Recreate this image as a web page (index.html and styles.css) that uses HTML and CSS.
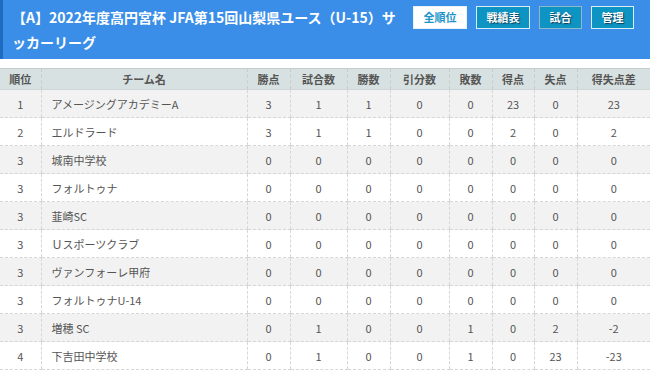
FILE: index.html
```html
<!DOCTYPE html>
<html lang="ja">
<head>
<meta charset="utf-8">
<link rel="stylesheet" href="styles.css">
</head>
<body>
<header class="bar">
  <h1 class="title">【A】2022年度高円宮杯 JFA第15回山梨県ユース（U-15）サッカーリーグ</h1>
  <nav class="btns">
    <a class="btn btn-active">全順位</a>
    <a class="btn btn-a">戦績表</a>
    <a class="btn btn-b">試合</a>
    <a class="btn btn-c">管理</a>
  </nav>
</header>
<table class="standings">
  <colgroup>
    <col class="c1"><col class="c2"><col class="c3"><col class="c4"><col class="c5">
    <col class="c6"><col class="c7"><col class="c8"><col class="c9"><col class="c10">
  </colgroup>
  <thead>
    <tr><th>順位</th><th>チーム名</th><th>勝点</th><th>試合数</th><th>勝数</th><th>引分数</th><th>敗数</th><th>得点</th><th>失点</th><th>得失点差</th></tr>
  </thead>
  <tbody>
    <tr><td>1</td><td class="name">アメージングアカデミーA</td><td>3</td><td>1</td><td>1</td><td>0</td><td>0</td><td>23</td><td>0</td><td>23</td></tr>
    <tr><td>2</td><td class="name">エルドラード</td><td>3</td><td>1</td><td>1</td><td>0</td><td>0</td><td>2</td><td>0</td><td>2</td></tr>
    <tr><td>3</td><td class="name">城南中学校</td><td>0</td><td>0</td><td>0</td><td>0</td><td>0</td><td>0</td><td>0</td><td>0</td></tr>
    <tr><td>3</td><td class="name">フォルトゥナ</td><td>0</td><td>0</td><td>0</td><td>0</td><td>0</td><td>0</td><td>0</td><td>0</td></tr>
    <tr><td>3</td><td class="name">韮崎SC</td><td>0</td><td>0</td><td>0</td><td>0</td><td>0</td><td>0</td><td>0</td><td>0</td></tr>
    <tr><td>3</td><td class="name">Ｕスポーツクラブ</td><td>0</td><td>0</td><td>0</td><td>0</td><td>0</td><td>0</td><td>0</td><td>0</td></tr>
    <tr><td>3</td><td class="name">ヴァンフォーレ甲府</td><td>0</td><td>0</td><td>0</td><td>0</td><td>0</td><td>0</td><td>0</td><td>0</td></tr>
    <tr><td>3</td><td class="name">フォルトゥナU-14</td><td>0</td><td>0</td><td>0</td><td>0</td><td>0</td><td>0</td><td>0</td><td>0</td></tr>
    <tr><td>3</td><td class="name">増穂 SC</td><td>0</td><td>1</td><td>0</td><td>0</td><td>1</td><td>0</td><td>2</td><td>-2</td></tr>
    <tr><td>4</td><td class="name">下吉田中学校</td><td>0</td><td>1</td><td>0</td><td>0</td><td>1</td><td>0</td><td>23</td><td>-23</td></tr>
  </tbody>
</table>
</body>
</html>
```

FILE: styles.css
```css
html, body {
  margin: 0;
  padding: 0;
  background: #ffffff;
  font-family: "Noto Sans CJK JP", "Noto Sans", sans-serif;
}

.bar {
  display: flex;
  align-items: flex-start;
  height: 59px;
  box-sizing: border-box;
  background: #3a8ee8;
  border-left: 3px solid #1d6cc2;
  padding: 5px 16px 0 9px;
  margin-bottom: 9px;
}

.title {
  flex: 1;
  margin: 0;
  padding-right: 14px;
  font-size: 14px;
  line-height: 25px;
  font-weight: bold;
  color: #ffffff;
  letter-spacing: 0;
}

.btns {
  display: flex;
  gap: 9px;
  margin-top: 1px;
  flex-shrink: 0;
}

.btn {
  display: block;
  height: 23px;
  box-sizing: border-box;
  padding: 0 9.5px;
  font-size: 11px;
  line-height: 21px;
  font-weight: bold;
  color: #ffffff;
  background: #0e94c2;
  border: 1px solid #d8eef6;
  text-shadow: 1px 1px 1px #0a3a55;
  cursor: pointer;
}

.btn-active {
  background: #ffffff;
  color: #1c95cb;
  text-shadow: none;
  border-color: #e8f0f8;
}

.btn-b {
  border-color: #8fb8c8;
}

.standings {
  width: 650px;
  border-collapse: collapse;
  table-layout: fixed;
  border-top: 1px solid #c8cccc;
  color: #555555;
  font-size: 11px;
}

.c1 { width: 41px; }
.c2 { width: 206px; }
.c3 { width: 43px; }
.c4 { width: 57px; }
.c5 { width: 43px; }
.c6 { width: 59px; }
.c7 { width: 43px; }
.c8 { width: 42px; }
.c9 { width: 43px; }
.c10 { width: 73px; }

.standings th {
  height: 20px;
  padding: 0;
  background: #d8e1e1;
  font-weight: bold;
  color: #555555;
  text-align: center;
  border-left: 1px dashed #c4cccc;
  border-bottom: 1px solid #d0d6d6;
}

.standings td {
  height: 27px;
  padding: 0;
  text-align: center;
  border-left: 1px dashed #d6d6d6;
  border-bottom: 1px dashed #d6d6d6;
}

.standings th:first-child,
.standings td:first-child {
  border-left: none;
}

.standings td.name {
  text-align: left;
  padding-left: 10px;
}

.standings tbody tr:nth-child(odd) {
  background: #f2f2f2;
}
```
